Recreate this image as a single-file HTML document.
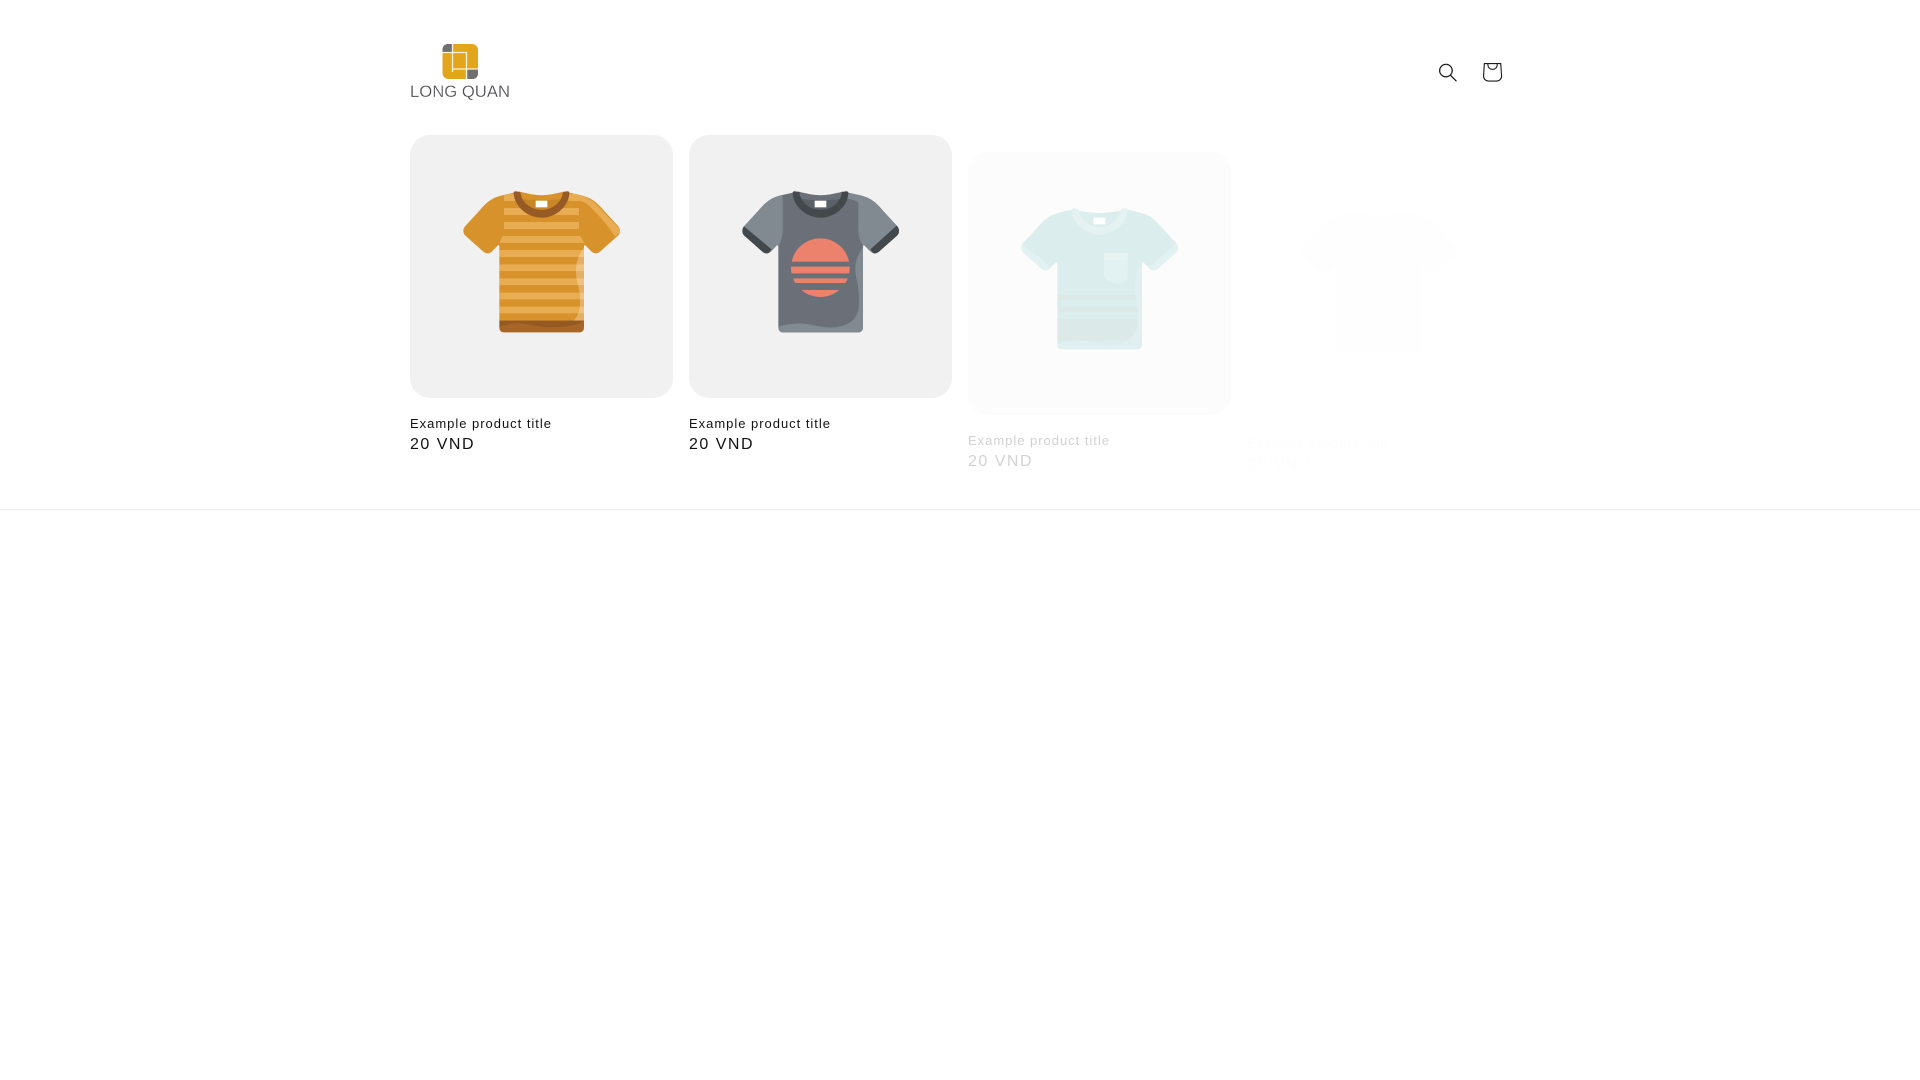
<!DOCTYPE html>
<html lang="en"><head><meta charset="utf-8"><title>Long Quan</title>
<style>
html,body{margin:0;padding:0;background:#fff;width:1920px;height:1080px;overflow:hidden}
body{position:relative;font-family:"Liberation Sans",sans-serif;color:#121212}
.abs{position:absolute}
.card{position:absolute;width:263px;height:263px;display:block}
.t{position:absolute;font-size:13px;line-height:16px;letter-spacing:.98px;white-space:nowrap}
.p{position:absolute;font-size:16px;line-height:20px;letter-spacing:1.5px;white-space:nowrap}
</style></head><body>
<svg width="0" height="0" style="position:absolute"><defs>
<path id="s" d="M342 188C325 192 305 195 285 203C265 212 250 228 240 240L196 288C188 297 188 309 196 317L250 365C258 372 268 372 276 364L293 347Q298 343 298 350L298 592Q298 607 313 607L537 607Q552 607 552 592L552 350Q552 343 557 347L574 364C582 372 592 372 600 365L654 317C662 309 662 297 654 288L610 240C600 228 585 212 565 203C545 195 525 192 507 188C480 193 450 198 425 198C400 198 370 193 342 188Z"/>
<clipPath id="c"><use href="#s"/></clipPath>
<path id="collar" d="M341 190Q340 183 350 184L361 186C364 218 395 240 425 240C455 240 486 218 489 186L499 184Q509 183 508 190C505 232 465 263 425 263C385 263 344 232 341 190Z"/>
<path id="neck" d="M358 185C385 192 405 196 425 196C445 196 465 192 492 185L492 200C485 225 455 242 425 242C395 242 365 225 358 200Z"/>
</defs></svg>

<!-- logo -->
<svg class="abs" style="left:405px;top:40px" width="110" height="62" viewBox="405 40 110 62">
<g style="filter:blur(.35px)">
<rect x="442.500" y="44" width="35.500" height="35" rx="6" fill="#E3A51C"/>
<path d="M452.500 44H448.500Q442.500 44 442.500 50V52.500H452.500Z" fill="#6F6F72"/>
<path d="M467.500 69H478V73Q478 79 472 79H467.500Z" fill="#6F6F72"/>
<path d="M452.500 44V72M442.500 52.500H466.500V79M452.500 69H478" stroke="#FBF3DC" stroke-width="1.300" fill="none"/>
</g>
<text x="410" y="97" font-family="Liberation Sans" font-size="17" fill="#4A4A4E" stroke="#fff" stroke-width=".25" textLength="100" lengthAdjust="spacingAndGlyphs">LONG QUAN</text>
</svg>

<!-- search -->
<svg class="abs" style="left:1439px;top:63px" width="18" height="19" viewBox="0 0 18 19"><path fill="#121212" stroke="#121212" stroke-width=".25" fill-rule="evenodd" clip-rule="evenodd" d="M11.03 11.68A5.784 5.784 0 112.85 3.5a5.784 5.784 0 018.18 8.18zm.26 1.12a6.78 6.78 0 11.72-.7l5.4 5.4a.5.5 0 11-.71.7l-5.41-5.4z"/></svg>
<!-- cart -->
<svg class="abs" style="left:1470px;top:50px" width="44" height="44" viewBox="0 0 40 40"><path fill="#1c1c1c" fill-rule="evenodd" d="m15.75 11.8h-3.16l-.77 11.6a5 5 0 0 0 4.99 5.34h7.38a5 5 0 0 0 4.99-5.33l-.78-11.61zm0 1h-2.22l-.71 10.67a4 4 0 0 0 3.99 4.27h7.38a4 4 0 0 0 4-4.27l-.72-10.67h-2.22v.63a4.75 4.75 0 1 1 -9.5 0zm8.5 0h-7.5v.63a3.75 3.75 0 1 0 7.5 0z"/></svg>

<!-- card 1 -->
<svg class="card" style="left:410px;top:135px" viewBox="30 15 789 789">
<rect x="30" y="15" width="789" height="789" rx="60" fill="#F1F1F1"/>
<use href="#s" fill="#D8922B"/>
<g clip-path="url(#c)">
<path d="M505 190C540 195 560 200 575 212C590 222 600 235 612 248L665 303L645 320C620 280 590 250 570 230C555 215 535 208 505 206Z" fill="#E8AC52"/>
<path fill="#E8AC52" d="M312 192H345V213H312ZM505 192H537V213H505ZM312 234H537V255H312ZM312 276H537V297H312ZM308 318H541L552 339H298ZM298 360H552V381H298ZM298 403H552V423H298ZM298 445H552V465H298ZM298 488H552V508H298ZM298 530H552V550H298Z"/>
<path d="M552 352C535 375 526 400 528 430C530 460 542 480 540 520C539 560 520 585 470 592L552 610Z" fill="#fff" opacity=".28"/>
<rect x="298" y="572" width="254" height="36" fill="#A76628"/>
<path d="M298 572H552C540 585 500 592 450 592C410 592 385 580 355 580C330 580 315 586 298 590Z" fill="#955A22"/>
</g>
<use href="#neck" fill="#C98625"/>
<path d="M358 185C385 192 405 196 425 196C445 196 465 192 492 185L488 206C460 212 390 212 362 206Z" fill="#D8922B"/>
<use href="#collar" fill="#965A24"/>
<rect x="407" y="212" width="35" height="20" fill="#fff"/>
</svg>

<!-- card 2 -->
<svg class="card" style="left:689px;top:135px" viewBox="30 15 789 789">
<rect x="30" y="15" width="789" height="789" rx="60" fill="#F1F1F1"/>
<use href="#s" fill="#6B7078"/>
<g clip-path="url(#c)">
<path d="M311 190V300C311 320 305 335 298 350L270 380L180 305L240 230L285 198Z" fill="#828A91"/>
<path d="M505 206C520 208 530 212 538 218V300C538 320 545 335 552 350L580 380L670 305L610 230L565 198L505 190Z" fill="#828A91"/>
<path d="M190 285L278 358L262 378L240 370L180 312Z" fill="#43484C"/>
<path d="M655 285L574 358L590 378L610 370L670 312Z" fill="#43484C"/>
<path d="M552 352C535 375 526 400 530 430C534 460 542 480 540 520C539 560 520 585 470 592C420 595 400 580 360 580C335 580 315 586 298 590V610H552Z" fill="#828A91"/>
</g>
<use href="#neck" fill="#5A6067"/>
<path d="M358 185C385 192 405 196 425 196C445 196 465 192 492 185L488 206C460 212 390 212 362 206Z" fill="#6B7078"/>
<use href="#collar" fill="#43484C"/>
<rect x="407" y="212" width="35" height="20" fill="#fff"/>
<clipPath id="sun"><path d="M300 320H560V395H300ZM300 410H560V430H300ZM300 445H560V459H300ZM300 480H560V502H300Z"/></clipPath>
<circle cx="424" cy="413" r="88" fill="#EC826C" clip-path="url(#sun)"/>
</svg>

<!-- card 3 -->
<svg class="card" style="left:968px;top:152px" viewBox="30 15 789 789">
<rect x="30" y="15" width="789" height="789" rx="60" fill="#FCFCFC"/>
<use href="#s" fill="#DCEDED"/>
<g clip-path="url(#c)">
<path d="M190 290L278 358L262 378L240 370L180 312Z" fill="#E2F1F1"/>
<path d="M655 290L574 358L590 378L610 370L670 312Z" fill="#E2F1F1"/>
<path d="M298 444H552V459H298ZM298 481H552V495H298ZM298 516H552V580H298Z" fill="#DBE9E9"/>
<path d="M552 352C535 375 526 400 530 430C534 460 542 480 540 520C539 560 520 585 470 592C420 595 400 580 360 580C335 580 315 586 298 590V610H552Z" fill="#E0EFEF"/>
<path d="M438 318H509V396Q490 415 470 409Q438 400 438 385Z" fill="#E2F1F1"/>
</g>
<path d="M438 318H509V339H438Z" fill="#E6F3F3"/>
<use href="#collar" fill="#E4F2F2"/>
<rect x="406" y="212" width="36" height="20" fill="#fff"/>
</svg>

<!-- card 4 -->
<svg class="card" style="left:1247px;top:155px" viewBox="30 15 789 789">
<use href="#s" fill="#FEFEFE"/>
</svg>

<div class="t" style="left:410px;top:416px">Example product title</div>
<div class="p" style="left:410px;top:435px">20 VND</div>
<div class="t" style="left:689px;top:416px">Example product title</div>
<div class="p" style="left:689px;top:435px">20 VND</div>
<div class="t" style="left:968px;top:433px;color:#D2D2D2">Example product title</div>
<div class="p" style="left:968px;top:452px;color:#D2D2D2">20 VND</div>
<div class="t" style="left:1247px;top:436px;color:#FDFDFD">Example product title</div>
<div class="p" style="left:1247px;top:455px;color:#FDFDFD">20 VND</div>

<div class="abs" style="left:0;top:509px;width:1920px;height:1px;background:#EBEBEB"></div>
</body></html>
